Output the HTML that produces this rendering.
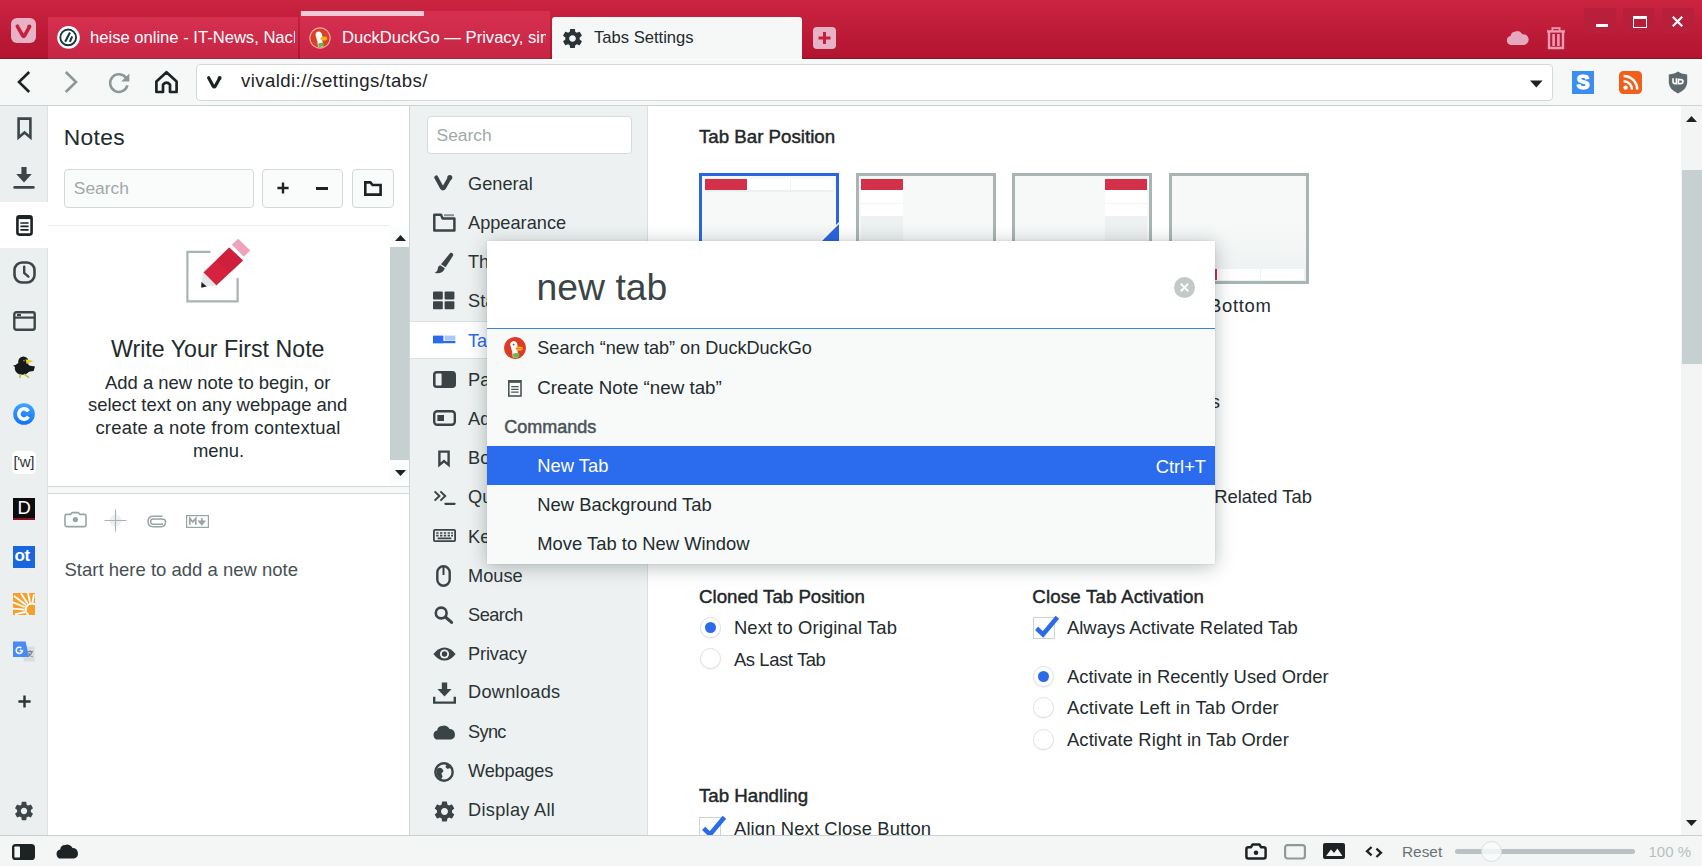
<!DOCTYPE html>
<html>
<head>
<meta charset="utf-8">
<title>Tabs Settings</title>
<style>
*{box-sizing:border-box;margin:0;padding:0}
html,body{width:1702px;height:866px;overflow:hidden;background:#fff}
body{font-family:"Liberation Sans",sans-serif;color:#222b2d;position:relative;font-size:18.4px}
.abs{position:absolute}
.t{position:absolute;white-space:pre;line-height:1}
svg{position:absolute;overflow:visible}
/* header */
#hdr{left:0;top:0;width:1702px;height:59px;background:linear-gradient(#ca2441,#b2142f);border-bottom:1px solid #8c122b}
.tab{position:absolute;top:17px;height:42px;background:linear-gradient(#d6304f,#c72545);border-bottom:1px solid #a92845}
.tab .t{color:#fff;font-size:16.6px;top:13px}
#tab3{background:#f6f8f8;border-radius:3px 3px 0 0;border-bottom:0}
#tab3 .t{color:#222b2d}
.wc{position:absolute;top:8px;width:32px;height:25px;background:#b81f3b;border-radius:2px}
/* toolbar */
#tb{left:0;top:59px;width:1702px;height:46px;background:#f6f8f8;border-top:1px solid #fdfcfd}
#tbline{left:0;top:105px;width:1702px;height:1px;background:#ccd3d3}
#addr{left:196px;top:64px;width:1357px;height:37px;background:#fff;border:1px solid #d3d9d9;border-radius:4px}
/* panel strip */
#strip{left:0;top:106px;width:48px;height:729px;background:#ebefef;border-right:1px solid #dde2e2}
#stripact{left:0;top:202px;width:48px;height:46px;background:#fff}
/* notes panel */
#notes{left:48px;top:106px;width:361px;height:729px;background:#fff}
#notesr{left:409px;top:106px;width:1px;height:729px;background:#cfd6d6}
.inp{position:absolute;background:#fafbfb;border:1px solid #d3d9d9;border-radius:4px}
/* settings sidebar */
#side{left:410px;top:106px;width:238px;height:729px;background:#edf1f1;border-right:1px solid #dbe0e0}
.si{position:absolute;left:468px;font-size:18.2px;color:#2a3335;white-space:pre;line-height:1}
/* content */
#content{left:648px;top:106px;width:1032px;height:729px;background:#fff}
h3{position:absolute;font-size:18.7px;font-weight:400;color:#1f2729;-webkit-text-stroke:.45px #1f2729;white-space:pre;line-height:1}
.lb{position:absolute;font-size:18.4px;color:#222b2d;white-space:pre;line-height:1}
.radio{position:absolute;width:21px;height:21px;border-radius:50%;background:#fff;border:1px solid #dde2e2;box-shadow:0 1px 1px rgba(0,0,0,.06)}
.radio.on::after{content:"";position:absolute;left:4px;top:4px;width:11px;height:11px;border-radius:50%;background:#2b6bea}
.cb{position:absolute;width:22px;height:22px;background:#fcfdfd;border:1px solid #cdd3d3}
.thumb{position:absolute;top:173px;width:140px;height:111px;border:3px solid #a9b4b4;background:linear-gradient(#f7f9f9 45%,#eef1f1)}
/* status bar */
#status{left:0;top:835px;width:1702px;height:31px;background:#f4f6f6;border-top:1px solid #c9d0d0}
/* popup */
#pop{left:487px;top:241.4px;width:728.3px;height:322.2px;background:#f8fafa;box-shadow:0 3px 18px rgba(0,30,30,.28),0 0 2px rgba(0,30,30,.10)}
#pophead{left:0;top:0;width:728px;height:87.5px;background:#fff;border-bottom:1px solid #3c82d8}
.row{position:absolute;left:0;width:728px;height:39px}
.row .t{left:50.3px;top:10px;font-size:18.4px}
</style>
</head>
<body>
<div id="hdr" class="abs">
<!-- vivaldi menu button -->
<div class="abs" style="left:11px;top:18px;width:25px;height:25px;border-radius:6px;background:#e8b2c6"></div>
<svg style="left:11px;top:18px" width="25" height="25" viewBox="0 0 25 25"><path d="M6.3 8.2 L11.6 17.6 Q12.6 19.2 13.6 17.6 L18 9.6" fill="none" stroke="#c5213e" stroke-width="3.6" stroke-linecap="round" stroke-linejoin="round"/><circle cx="18.3" cy="8.6" r="2.1" fill="#c5213e"/></svg>
<!-- tab 1 -->
<div class="tab" style="left:48px;width:250px"><div class="abs" style="left:0;top:0;width:247px;height:100%;overflow:hidden"><span class="t" style="left:42px">heise online - IT-News, Nach</span></div></div>
<svg style="left:57px;top:26.4px" width="23" height="23" viewBox="0 0 23 23"><circle cx="11.5" cy="11.4" r="11.3" fill="#fff"/><circle cx="11.2" cy="11.4" r="7.9" fill="none" stroke="#17393a" stroke-width="1.9"/><path d="M8.2 15.8 L13 6.6" stroke="#17393a" stroke-width="2.1"/><path d="M12.9 15.8 L15.2 10.4" stroke="#17393a" stroke-width="2.1"/></svg>
<!-- tab 2 -->
<div class="tab" style="left:300px;width:250px;top:11px;height:48px"><div class="abs" style="left:0;top:0;width:246px;height:100%;overflow:hidden"><span class="t" style="left:42px;top:19px">DuckDuckGo — Privacy, sim</span></div></div>
<div class="abs" style="left:301px;top:11px;width:123px;height:5px;background:#f3c8d7"></div>
<svg style="left:309.4px;top:27.2px" width="22" height="22" viewBox="0 0 22 22"><circle cx="11" cy="11" r="10.7" fill="#f5a9a3"/><circle cx="11" cy="11" r="9.6" fill="#dc3f28"/><path d="M6.8 6 Q10.4 3 12.8 6.4 Q13.8 9 13 12.2 L14.4 19.4 Q11.6 20.8 9 19.8 Q8.6 14.4 7.2 10.6 Q6 7.6 6.8 6Z" fill="#fcfcfa"/><ellipse cx="14.8" cy="11.6" rx="3.4" ry="2" fill="#f7b21d"/><path d="M9.2 16.6 Q12.2 15.2 15 16.2 L14.4 19 Q11.8 20.6 9.6 19.8Z" fill="#58c044"/></svg>
<!-- tab 3 active -->
<div class="tab" id="tab3" style="left:552px;width:250px"><span class="t" style="left:42px">Tabs Settings</span></div>
<svg style="left:561px;top:26.6px" width="23" height="23" viewBox="0 0 24 24"><path fill="#2a3335" d="M19.43 12.98c.04-.32.07-.64.07-.98s-.03-.66-.07-.98l2.11-1.65c.19-.15.24-.42.12-.64l-2-3.46c-.12-.22-.39-.3-.61-.22l-2.49 1c-.52-.4-1.08-.73-1.69-.98l-.38-2.65C14.46 2.18 14.25 2 14 2h-4c-.25 0-.46.18-.49.42l-.38 2.65c-.61.25-1.17.59-1.69.98l-2.49-1c-.23-.09-.49 0-.61.22l-2 3.46c-.13.22-.07.49.12.64l2.11 1.65c-.04.32-.07.65-.07.98s.03.66.07.98l-2.11 1.65c-.19.15-.24.42-.12.64l2 3.46c.12.22.39.3.61.22l2.49-1c.52.4 1.08.73 1.69.98l.38 2.65c.03.24.24.42.49.42h4c.25 0 .46-.18.49-.42l.38-2.65c.61-.25 1.17-.59 1.69-.98l2.49 1c.23.09.49 0 .61-.22l2-3.46c.12-.22.07-.49-.12-.64l-2.11-1.65zM12 15.5c-1.93 0-3.5-1.57-3.5-3.5s1.57-3.5 3.5-3.5 3.5 1.57 3.5 3.5-1.57 3.5-3.5 3.5z"/></svg>
<!-- new tab button -->
<div class="abs" style="left:813px;top:27px;width:23px;height:22px;border-radius:4px;background:#e8b2c6"></div>
<svg style="left:813px;top:27px" width="23" height="22" viewBox="0 0 23 22"><path d="M11.5 5 V17 M5.5 11 H17.5" stroke="#c5213e" stroke-width="3"/></svg>
<!-- cloud + trash -->
<svg style="left:1506px;top:30px" width="23" height="16" viewBox="0 0 23 16"><path fill="#e6a8bf" d="M5 15 A4.6 4.6 0 0 1 4.6 5.9 A5.2 5.2 0 0 1 9.4 1.4 A6.2 6.2 0 0 1 16.4 4.2 A5.4 5.4 0 0 1 18 15Z"/></svg>
<svg style="left:1546px;top:27px" width="20" height="23" viewBox="0 0 20 23"><path d="M1 4.4 H19" stroke="#ef9bb0" stroke-width="2.4"/><path d="M6.4 3.6 V1.2 H13.6 V3.6" fill="none" stroke="#ef9bb0" stroke-width="1.8"/><path d="M3 5 V21 H17 V5" fill="none" stroke="#ef9bb0" stroke-width="2.4"/><path d="M7.6 7 V19 M12.4 7 V19" stroke="#ef9bb0" stroke-width="2.6"/></svg>
<!-- window controls -->
<div class="wc" style="left:1584px"></div><div class="wc" style="left:1623px"></div><div class="wc" style="left:1662px"></div>
<div class="abs" style="left:1596px;top:24px;width:12px;height:3px;background:#fff"></div>
<div class="abs" style="left:1633px;top:15.5px;width:14px;height:12px;border:1.6px solid #fff;border-top-width:3.4px"></div>
<svg style="left:1672px;top:15.5px" width="11" height="11" viewBox="0 0 11 11"><path d="M0.8 0.8 L10.2 10.2 M10.2 0.8 L0.8 10.2" stroke="#fff" stroke-width="2.2"/></svg>
</div>
<div id="tb" class="abs"></div>
<svg style="left:14px;top:68px" width="20" height="28" viewBox="0 0 20 28"><path d="M15.2 4 L5 14 L15.2 24" fill="none" stroke="#1d2325" stroke-width="2.6"/></svg>
<svg style="left:61px;top:68px" width="20" height="28" viewBox="0 0 20 28"><path d="M4.8 4 L15 14 L4.8 24" fill="none" stroke="#8c9798" stroke-width="2.6"/></svg>
<svg style="left:106px;top:70px" width="26" height="26" viewBox="0 0 26 26"><path d="M20.2 8.2 A8.8 8.8 0 1 0 21.4 15.4" fill="none" stroke="#8c9798" stroke-width="2.5"/><path d="M23.4 3.4 V11.6 H15.2Z" fill="#8c9798"/></svg>
<svg style="left:153px;top:69px" width="27" height="27" viewBox="0 0 27 27"><path d="M3.4 12.4 L13.5 3.2 L23.6 12.4 V23 H17 V15.6 Q13.5 11.6 10 15.6 V23 H3.4Z" fill="none" stroke="#1d2325" stroke-width="2.7" stroke-linejoin="round"/></svg>
<div id="addr" class="abs"></div>
<svg style="left:206px;top:75px" width="17" height="15" viewBox="0 0 17 15"><path d="M2.6 2.8 L7.2 11.2 Q8.2 12.8 9.2 11.2 L13.2 4" fill="none" stroke="#1d2325" stroke-width="3.2" stroke-linecap="round" stroke-linejoin="round"/><circle cx="13.6" cy="3" r="2" fill="#1d2325"/></svg>
<span class="t" style="left:241px;top:72.2px;font-size:18.6px;letter-spacing:.42px;color:#1d2325">vivaldi://settings/tabs/</span>
<svg style="left:1530px;top:80px" width="13" height="8" viewBox="0 0 13 8"><path d="M0 0.4 H12.6 L6.3 7.4Z" fill="#1d2325"/></svg>
<!-- ext icons -->
<div class="abs" style="left:1572px;top:71px;width:22px;height:23px;background:#3b8eee"></div>
<span class="t" style="left:1576.5px;top:73px;font-size:19.5px;font-weight:700;color:#fff;-webkit-text-stroke:1.2px #fff">S</span>
<div class="abs" style="left:1619px;top:71px;width:23px;height:23px;border-radius:4.5px;background:#f0601c"></div>
<svg style="left:1619px;top:71px" width="23" height="23" viewBox="0 0 23 23"><circle cx="6.6" cy="16.6" r="2.2" fill="#fff"/><path d="M4.6 10.2 A8.4 8.4 0 0 1 13 18.6" fill="none" stroke="#fff" stroke-width="2.5"/><path d="M4.6 5 A13.6 13.6 0 0 1 18.2 18.6" fill="none" stroke="#fff" stroke-width="2.5"/></svg>
<svg style="left:1668px;top:71px" width="20" height="23" viewBox="0 0 20 23"><path d="M10 0.6 Q13 3 19.2 3.4 V12 Q18.6 18.6 10 22.4 Q1.4 18.6 0.8 12 V3.4 Q7 3 10 0.6Z" fill="#5d696c"/><path d="M5 7.2 V10.4 Q5 12.6 7.2 12.6 H8.4 V7.2" fill="none" stroke="#fff" stroke-width="1.6"/><path d="M10.4 7.4 V12.6 H12.4 Q15 12.6 15 10.4 Q15 8.6 12.6 8.6 H10.4" fill="none" stroke="#fff" stroke-width="1.6"/></svg>
<div id="tbline" class="abs"></div>
<div id="strip" class="abs"></div>
<div id="stripact" class="abs"></div>
<!-- bookmark -->
<svg style="left:17px;top:117px" width="15" height="23" viewBox="0 0 15 23"><path d="M1.6 1.6 H13.4 V20.4 L7.5 15.4 L1.6 20.4Z" fill="none" stroke="#3c4649" stroke-width="2.6" stroke-linejoin="miter"/></svg>
<!-- download -->
<svg style="left:14px;top:166px" width="20" height="24" viewBox="0 0 20 24"><path d="M7.4 1 H12.6 V8 H17.8 L10 16.4 L2.2 8 H7.4Z" fill="#3c4649"/><path d="M0.6 21.4 H19.4" stroke="#3c4649" stroke-width="2.6" stroke-linecap="round"/></svg>
<!-- notes (active) -->
<svg style="left:16px;top:215px" width="17" height="21" viewBox="0 0 17 21"><rect x="1.4" y="1.4" width="14.2" height="18.2" rx="2" fill="none" stroke="#1d2325" stroke-width="2.6"/><path d="M1.4 2.6 H15.6" stroke="#1d2325" stroke-width="3"/><path d="M4.4 8 H12.6 M4.4 11.4 H12.6 M4.4 14.8 H12.6" stroke="#1d2325" stroke-width="1.7"/></svg>
<!-- history -->
<svg style="left:13px;top:261px" width="23" height="23" viewBox="0 0 23 23"><rect x="1.5" y="1.5" width="20" height="20" rx="7.6" fill="none" stroke="#3c4649" stroke-width="2.6"/><path d="M11.2 5.6 V12 L15.4 15.6" fill="none" stroke="#3c4649" stroke-width="2.4" stroke-linecap="round"/></svg>
<!-- window -->
<svg style="left:13px;top:311px" width="23" height="20" viewBox="0 0 23 20"><rect x="1.3" y="1.3" width="20.4" height="17.4" rx="2" fill="none" stroke="#3c4649" stroke-width="2.4"/><path d="M1.3 6.6 H21.7" stroke="#3c4649" stroke-width="2.2"/><rect x="4" y="3" width="4" height="2.2" fill="#3c4649"/></svg>
<!-- bird -->
<svg style="left:12px;top:355px" width="24" height="24" viewBox="0 0 24 24"><ellipse cx="10.4" cy="13.4" rx="7.6" ry="6.4" fill="#14191a"/><circle cx="11.4" cy="6.8" r="5.2" fill="#14191a"/><path d="M1 10.6 L8 9 L8 16Z M14 10 L23 11.4 L21.6 16 L15 17Z" fill="#14191a"/><path d="M13.6 4.2 L21.6 6 L14.6 9Z" fill="#e8cf24"/><path d="M8.6 19 L7.6 23 M12 19.2 L17 22.6" stroke="#b9c238" stroke-width="1.6"/><circle cx="12" cy="5.6" r="0.9" fill="#d64"/></svg>
<!-- C -->
<svg style="left:13px;top:403px" width="22" height="22" viewBox="0 0 22 22"><defs><linearGradient id="cg" x1="0" y1="0" x2="0" y2="1"><stop offset="0" stop-color="#42a4ff"/><stop offset="1" stop-color="#1173f2"/></linearGradient></defs><circle cx="11" cy="11" r="10.8" fill="url(#cg)"/><path d="M15.4 8.2 A5.2 5.2 0 1 0 15.4 13.8" fill="none" stroke="#fff" stroke-width="3.6"/></svg>
<!-- ['w] -->
<div class="abs" style="left:12px;top:451px;width:24px;height:23px;border-radius:5px;background:#fff"></div>
<span class="t" style="left:13.5px;top:454px;font-size:15px;color:#2b3436;letter-spacing:-.4px">['w]</span>
<!-- D -->
<div class="abs" style="left:13px;top:498px;width:22px;height:22px;background:#0c0c0e;border-bottom:2px solid #8a1220"></div>
<span class="t" style="left:17.5px;top:499px;font-size:18.5px;color:#fff">D</span>
<!-- ot -->
<div class="abs" style="left:13px;top:546px;width:22px;height:22px;background:#1a66e0"></div>
<span class="t" style="left:14.5px;top:547px;font-size:17px;font-weight:700;color:#fff;letter-spacing:-.5px">ot</span>
<!-- sun -->
<svg style="left:13px;top:593px" width="22" height="22" viewBox="0 0 22 22"><rect width="22" height="22" fill="#f5a02c"/><path d="M1 3 L13 12 M0 9.4 L11.6 14 M0 15.6 L11.4 16.6 M2 21.4 L12 19 M8 0.6 L14.6 10.4 M15 0 L17 9.6 M21 1.4 L19.4 10" stroke="#fff" stroke-width="1.8"/><path d="M22 11.4 A5.6 5.6 0 0 0 15.6 22" fill="none" stroke="#fff" stroke-width="2"/></svg>
<!-- G translate -->
<svg style="left:12px;top:640px" width="24" height="24" viewBox="0 0 24 24"><path d="M9 6.4 H22.6 V21.6 H12Z" fill="#d9dde0"/><path d="M1 1.4 H13.6 L17 17 H1Z" fill="#4a8af4"/><path d="M9.4 8 A3.1 3.1 0 1 0 10.4 10.6 H7.6" fill="none" stroke="#fff" stroke-width="1.5"/><path d="M15.4 11.6 H21 M18.2 10.2 V11.6 M16.4 16.4 Q19.4 14.6 20 11.6 M16.6 13 Q17.8 15.6 20.6 16.6" fill="none" stroke="#7d868c" stroke-width="1.2"/></svg>
<!-- plus -->
<svg style="left:17.5px;top:694.5px" width="13" height="13" viewBox="0 0 13 13"><path d="M6.5 0.4 V12.6 M0.4 6.5 H12.6" stroke="#2a3335" stroke-width="2.4"/></svg>
<!-- gear -->
<svg style="left:13px;top:800px" width="22" height="22" viewBox="0 0 24 24"><path fill="#3c4649" d="M19.43 12.98c.04-.32.07-.64.07-.98s-.03-.66-.07-.98l2.11-1.65c.19-.15.24-.42.12-.64l-2-3.46c-.12-.22-.39-.3-.61-.22l-2.49 1c-.52-.4-1.08-.73-1.69-.98l-.38-2.65C14.46 2.18 14.25 2 14 2h-4c-.25 0-.46.18-.49.42l-.38 2.65c-.61.25-1.17.59-1.69.98l-2.49-1c-.23-.09-.49 0-.61.22l-2 3.46c-.13.22-.07.49.12.64l2.11 1.65c-.04.32-.07.65-.07.98s.03.66.07.98l-2.11 1.65c-.19.15-.24.42-.12.64l2 3.46c.12.22.39.3.61.22l2.49-1c.52.4 1.08.73 1.69.98l.38 2.65c.03.24.24.42.49.42h4c.25 0 .46-.18.49-.42l.38-2.65c.61-.25 1.17-.59 1.69-.98l2.49 1c.23.09.49 0 .61-.22l2-3.46c.12-.22.07-.49-.12-.64l-2.11-1.65zM12 15.5c-1.93 0-3.5-1.57-3.5-3.5s1.57-3.5 3.5-3.5 3.5 1.57 3.5 3.5-1.57 3.5-3.5 3.5z"/></svg>
<div id="notes" class="abs"></div>
<span class="t" style="left:63.8px;top:126.2px;font-size:22.8px;letter-spacing:.3px;color:#222b2d">Notes</span>
<div class="inp" style="left:64px;top:169px;width:190px;height:39px"></div>
<span class="t" style="left:73.8px;top:179.8px;font-size:17.4px;color:#a0a9a9">Search</span>
<div class="inp" style="left:262px;top:169px;width:81px;height:39px"></div>
<svg style="left:277px;top:182px" width="12" height="12" viewBox="0 0 12 12"><path d="M6 0.4 V11.6 M0.4 6 H11.6" stroke="#1d2325" stroke-width="2.4"/></svg>
<div class="abs" style="left:316px;top:187px;width:12px;height:2.6px;background:#1d2325"></div>
<div class="inp" style="left:352px;top:169px;width:42px;height:39px"></div>
<svg style="left:364px;top:181px" width="18" height="15" viewBox="0 0 18 15"><path d="M1.3 13.6 V1.4 H6.4 L8.6 4 H16.6 V13.6Z" fill="none" stroke="#1d2325" stroke-width="2.6" stroke-linejoin="miter"/></svg>
<!-- list area -->
<div class="abs" style="left:48px;top:225px;width:342px;height:1px;background:#e9eded"></div>
<div class="abs" style="left:390px;top:226px;width:19px;height:260px;background:#fbfcfc"></div>
<div class="abs" style="left:390px;top:247px;width:19px;height:213px;background:#c7d0d1"></div>
<svg style="left:394.5px;top:235px" width="11" height="6" viewBox="0 0 11 6"><path d="M0 6 L5.5 0 L11 6Z" fill="#1d2325"/></svg>
<svg style="left:394.5px;top:469.5px" width="11" height="6" viewBox="0 0 11 6"><path d="M0 0 L5.5 6 L11 0Z" fill="#1d2325"/></svg>
<!-- pencil icon -->
<svg style="left:180px;top:235px" width="76" height="72" viewBox="180 235 76 72"><path d="M210.5 251.8 H187.4 V301.4 H237.6 V278" fill="none" stroke="#a8b3b3" stroke-width="2.2"/><path d="M203.4 272.5 L229.2 247.5 L243 260.4 L216.3 285.5Z" fill="#d4233f"/><path d="M216.4 260 L229.2 247.5 L243 260.4 L230 272.6Z" fill="#c81f3b" opacity=".55"/><path d="M231.8 244.8 L238.2 238.8 L250.2 250.4 L243.8 256.8Z" fill="#eea3bd"/><path d="M203.4 272.5 L216.3 285.5 L206.6 286.4 L201.4 282.2Z" fill="#e3e9e9"/><path d="M201.4 282 L201.2 287.8 L206.8 286.4Z" fill="#1d2325"/></svg>
<span class="t" style="left:111px;top:337.5px;font-size:23.2px;color:#222b2d">Write Your First Note</span>
<span class="t" style="left:105px;top:373.5px;font-size:18.45px;color:#222b2d">Add a new note to begin, or</span>
<span class="t" style="left:88px;top:396.3px;font-size:18.45px;color:#222b2d">select text on any webpage and</span>
<span class="t" style="left:95.4px;top:419.2px;font-size:18.45px;letter-spacing:.22px;color:#222b2d">create a note from contextual</span>
<span class="t" style="left:193px;top:442px;font-size:18.45px;color:#222b2d">menu.</span>
<!-- splitter -->
<div class="abs" style="left:48px;top:486px;width:361px;height:8px;background:#f6f8f8;border-top:1px solid #d2d8d8;border-bottom:1px solid #d2d8d8"></div>
<!-- editor toolbar -->
<svg style="left:64px;top:511px" width="23" height="17" viewBox="0 0 23 17"><path d="M2.6 3.4 H6.6 L8 1.6 H14.4 L15.8 3.4 H20.4 Q22 3.4 22 5 V14 Q22 15.6 20.4 15.6 H2.6 Q1 15.6 1 14 V5 Q1 3.4 2.6 3.4Z" fill="none" stroke="#98a3a3" stroke-width="1.6"/><circle cx="11.4" cy="8.6" r="2.6" fill="#98a3a3"/></svg>
<svg style="left:104px;top:509px" width="23" height="23" viewBox="0 0 23 23"><circle cx="11.5" cy="11.5" r="6" fill="#eef1f1"/><path d="M11.5 0.5 V22.5 M0.5 11.5 H22.5" stroke="#a9b3b3" stroke-width="1.1"/></svg>
<svg style="left:147px;top:515px" width="20" height="13" viewBox="0 0 20 13"><path d="M16 9.2 H6 Q3.6 9.2 3.6 6.6 Q3.6 4 6 4 H14.4 Q18.6 4 18.6 6.6 Q18.6 11.8 14 11.8 H5.8 Q1 11.8 1 6.6 Q1 1.2 5.8 1.2 H15.4" fill="none" stroke="#98a3a3" stroke-width="1.5"/></svg>
<svg style="left:186px;top:514.5px" width="23" height="13" viewBox="0 0 23 13"><rect x="0.6" y="0.6" width="21.8" height="11.8" fill="none" stroke="#98a3a3" stroke-width="1.2"/><path d="M3.8 9.8 V3.4 L6.8 7 L9.8 3.4 V9.8" fill="none" stroke="#98a3a3" stroke-width="1.7"/><path d="M15.8 3 V8 M13 6.2 L15.8 9.6 L18.6 6.2Z" fill="#98a3a3" stroke="#98a3a3" stroke-width="1.5"/></svg>
<span class="t" style="left:64.5px;top:560.7px;font-size:18.5px;color:#465053">Start here to add a new note</span>
<div id="notesr" class="abs"></div>
<div id="side" class="abs"></div>
<div class="abs" style="left:427.4px;top:116px;width:204.2px;height:38.4px;background:#fff;border:1px solid #d5dbdb;border-radius:4px"></div>
<span class="t" style="left:436.6px;top:126.9px;font-size:17.4px;color:#a0a9a9">Search</span>
<div class="abs" style="left:410px;top:321px;width:237px;height:38px;background:#fff;border-top:1px solid #dbe0e0;border-bottom:1px solid #dbe0e0"></div>
<span class="si" style="top:174.5px;color:#2a3335">General</span>
<span class="si" style="top:213.5px;color:#2a3335">Appearance</span>
<span class="si" style="top:252.5px;color:#2a3335">Themes</span>
<span class="si" style="top:292.0px;color:#2a3335">Start Page</span>
<span class="si" style="top:331.5px;color:#2b6bea">Tabs</span>
<span class="si" style="top:370.5px;color:#2a3335">Panel</span>
<span class="si" style="top:409.5px;color:#2a3335">Address Bar</span>
<span class="si" style="top:449.0px;color:#2a3335">Bookmarks</span>
<span class="si" style="top:488.0px;color:#2a3335">Quick Commands</span>
<span class="si" style="top:527.5px;color:#2a3335">Keyboard</span>
<span class="si" style="top:566.5px;color:#2a3335">Mouse</span>
<span class="si" style="top:605.5px;color:#2a3335;letter-spacing:-0.5px">Search</span>
<span class="si" style="top:644.5px;color:#2a3335;letter-spacing:-0.15px">Privacy</span>
<span class="si" style="top:683.0px;color:#2a3335;letter-spacing:0.27px">Downloads</span>
<span class="si" style="top:722.5px;color:#2a3335;letter-spacing:-0.67px">Sync</span>
<span class="si" style="top:761.5px;color:#2a3335;letter-spacing:-0.2px">Webpages</span>
<span class="si" style="top:801.2px;color:#2a3335;letter-spacing:0.3px">Display All</span>
<svg style="left:433px;top:174px" width="21" height="18" viewBox="0 0 21 18"><path d="M3.2 3.4 L8.8 13.6 Q10 15.4 11.2 13.6 L16.2 4.8" fill="none" stroke="#3a4447" stroke-width="4" stroke-linecap="round" stroke-linejoin="round"/><circle cx="16.8" cy="3.6" r="2.5" fill="#3a4447"/></svg>
<svg style="left:433px;top:213px" width="23" height="19" viewBox="0 0 23 19"><path d="M1.3 17.6 V1.8 H8 L9.6 5.4 H21.4 V17.6Z" fill="none" stroke="#3a4447" stroke-width="2.5" stroke-linejoin="round"/><path d="M11 2.2 H21 " stroke="#3a4447" stroke-width="2" opacity=".55"/></svg>
<svg style="left:434px;top:252px" width="20" height="22" viewBox="0 0 20 22"><path d="M16.4 0.8 Q19.8 0.4 19 3.8 L11.6 15.2 L7 12.2 Z" fill="#3a4447"/><path d="M6.2 13.2 L10.8 16.2 Q9.4 22 0.6 21 Q4 18.8 3.8 16.2 Q4.2 13.6 6.2 13.2Z" fill="#3a4447"/></svg>
<svg style="left:433px;top:291px" width="22" height="19" viewBox="0 0 22 19"><rect x="0" y="0.4" width="9.8" height="8" rx="1" fill="#3a4447"/><rect x="11.6" y="0.4" width="9.8" height="8" rx="1" fill="#3a4447"/><rect x="0" y="10.2" width="9.8" height="8" rx="1" fill="#3a4447"/><rect x="11.6" y="10.2" width="9.8" height="8" rx="1" fill="#3a4447"/></svg>
<svg style="left:433px;top:335px" width="23" height="9" viewBox="0 0 23 9"><rect x="0" y="0.6" width="10.4" height="7.6" fill="#2b6bea"/><rect x="11.6" y="0.6" width="10.8" height="5" fill="#a9c8f5"/><rect x="0" y="6" width="22.4" height="2.2" fill="#2b6bea"/></svg>
<svg style="left:433px;top:371px" width="23" height="17" viewBox="0 0 23 17"><rect x="1.2" y="1.2" width="20.6" height="14.6" rx="2.6" fill="#3a4447" stroke="#3a4447" stroke-width="2.4"/><rect x="2.6" y="2.6" width="6" height="11.8" rx="1" fill="#edf1f1"/></svg>
<svg style="left:433px;top:410px" width="23" height="16" viewBox="0 0 23 16"><rect x="1.2" y="1.2" width="20.6" height="13.6" rx="3" fill="none" stroke="#3a4447" stroke-width="2.4"/><rect x="4.4" y="5" width="6.6" height="6" fill="#3a4447"/></svg>
<svg style="left:437.6px;top:449.6px" width="12" height="17" viewBox="0 0 13 18"><path d="M1.5 1.5 H11.5 V16 L6.5 11.8 L1.5 16Z" fill="none" stroke="#3a4447" stroke-width="2.6"/></svg>
<svg style="left:433px;top:490px" width="23" height="16" viewBox="0 0 23 16"><path d="M1.6 1.4 L6.4 6 L1.6 10.6 M7.4 1.4 L12.2 6 L7.4 10.6" fill="none" stroke="#3a4447" stroke-width="2"/><path d="M12.4 13.8 H21.6" stroke="#3a4447" stroke-width="2.2" stroke-linecap="round"/></svg>
<svg style="left:433px;top:529px" width="23" height="13" viewBox="0 0 23 13"><rect x="0.9" y="0.9" width="21.2" height="11.2" rx="1" fill="none" stroke="#3a4447" stroke-width="1.8"/><path d="M3.2 4 H5.6 M7 4 H9.4 M10.8 4 H13.2 M14.6 4 H17 M18.2 4 H20 M3.2 6.6 H5.6 M7 6.6 H9.4 M10.8 6.6 H13.2 M14.6 6.6 H17 M18.2 6.6 H20 M4.6 9.4 H18.4" stroke="#3a4447" stroke-width="1.7"/></svg>
<svg style="left:436px;top:564.5px" width="15" height="22" viewBox="0 0 15 22"><rect x="1.3" y="1.3" width="12.4" height="19.4" rx="6.2" fill="none" stroke="#3a4447" stroke-width="2.4"/><path d="M7.5 1.6 V10" stroke="#3a4447" stroke-width="2"/></svg>
<svg style="left:434px;top:606px" width="20" height="18" viewBox="0 0 20 18"><circle cx="7.2" cy="7" r="5.4" fill="none" stroke="#3a4447" stroke-width="2.6"/><path d="M11.4 11 L17.6 16.4" stroke="#3a4447" stroke-width="3" stroke-linecap="round"/></svg>
<svg style="left:432.5px;top:647px" width="23" height="14" viewBox="0 0 23 14"><path d="M0.4 7 Q5.4 0.4 11.5 0.4 Q17.6 0.4 22.6 7 Q17.6 13.6 11.5 13.6 Q5.4 13.6 0.4 7Z" fill="#3a4447"/><circle cx="11.5" cy="7" r="4.6" fill="#edf1f1"/><circle cx="11.5" cy="7" r="2.7" fill="#3a4447"/></svg>
<svg style="left:433px;top:682px" width="23" height="22" viewBox="0 0 23 22"><path d="M8.8 0.4 H14.2 V7 H18.6 L11.5 14.6 L4.4 7 H8.8Z" fill="#3a4447"/><path d="M1.2 14.8 V20.6 H21.8 V14.8" fill="none" stroke="#3a4447" stroke-width="2.4"/></svg>
<svg style="left:433px;top:725px" width="23" height="15" viewBox="0 0 23 15"><path fill="#3a4447" d="M5 14.6 A4.6 4.6 0 0 1 4.2 5.5 A5 5 0 0 1 9 1 A6.2 6.2 0 0 1 16.6 4 A5.4 5.4 0 0 1 18 14.6Z"/></svg>
<svg style="left:434px;top:761.5px" width="20" height="20" viewBox="0 0 20 20"><circle cx="10" cy="10" r="8.7" fill="none" stroke="#3a4447" stroke-width="2.4"/><path d="M3.4 6.4 Q6 5 8 6.4 L9.6 9 L7.4 11.4 L8.6 14.6 L7 17.4 Q2 14 2.4 9Z M12.6 2.4 L11.4 5 L13.6 7 L16 6 L17.4 7.6 Q16.6 3.8 12.6 2.4Z" fill="#3a4447"/></svg>
<svg style="left:433.5px;top:800.5px" width="21" height="21" viewBox="1.5 1.5 21 21"><path fill="#3a4447" d="M19.43 12.98c.04-.32.07-.64.07-.98s-.03-.66-.07-.98l2.11-1.65c.19-.15.24-.42.12-.64l-2-3.46c-.12-.22-.39-.3-.61-.22l-2.49 1c-.52-.4-1.08-.73-1.69-.98l-.38-2.65C14.46 2.18 14.25 2 14 2h-4c-.25 0-.46.18-.49.42l-.38 2.65c-.61.25-1.17.59-1.69.98l-2.49-1c-.23-.09-.49 0-.61.22l-2 3.46c-.13.22-.07.49.12.64l2.11 1.65c-.04.32-.07.65-.07.98s.03.66.07.98l-2.11 1.65c-.19.15-.24.42-.12.64l2 3.46c.12.22.39.3.61.22l2.49-1c.52.4 1.08.73 1.69.98l.38 2.65c.03.24.24.42.49.42h4c.25 0 .46-.18.49-.42l.38-2.65c.61-.25 1.17-.59 1.69-.98l2.49 1c.23.09.49 0 .61-.22l2-3.46c.12-.22.07-.49-.12-.64l-2.11-1.65zM12 15.5c-1.93 0-3.5-1.57-3.5-3.5s1.57-3.5 3.5-3.5 3.5 1.57 3.5 3.5-1.57 3.5-3.5 3.5z"/></svg>
<div id="content" class="abs"></div>
<!-- main scrollbar -->
<div class="abs" style="left:1681px;top:106px;width:21px;height:729px;background:#f3f5f5"></div>
<div class="abs" style="left:1682px;top:170px;width:20px;height:194px;background:#c7d0d1"></div>
<svg style="left:1686px;top:116px" width="11" height="6" viewBox="0 0 11 6"><path d="M0 6 L5.5 0 L11 6Z" fill="#1d2325"/></svg>
<svg style="left:1685.5px;top:819.5px" width="11" height="6" viewBox="0 0 11 6"><path d="M0 0 L5.5 6 L11 0Z" fill="#1d2325"/></svg>
<h3 style="left:699px;top:128.1px">Tab Bar Position</h3>
<!-- thumbnails -->
<div class="thumb" style="left:699px;border-color:#2b66e0">
 <div class="abs" style="left:3px;top:3px;width:42px;height:11px;background:#d3304a"></div>
 <div class="abs" style="left:45px;top:3px;width:86px;height:11px;background:#fff"></div>
 <div class="abs" style="left:88px;top:3px;width:1px;height:11px;background:#f1f3f3"></div>
 <div class="abs" style="left:3px;top:14px;width:128px;height:2px;background:#eef1f1"></div>
 <svg style="right:-3px;bottom:-3px" width="62" height="62" viewBox="0 0 62 62"><path d="M62 0 V62 H0Z" fill="#fff"/><path d="M62 2 V62 H2Z" fill="#2b66e0"/></svg>
</div>
<div class="thumb" style="left:856.2px">
 <div class="abs" style="left:2px;top:3px;width:42px;height:11px;background:#d3304a"></div>
 <div class="abs" style="left:2px;top:14px;width:42px;height:26px;background:#fff"></div>
 <div class="abs" style="left:2px;top:27px;width:42px;height:1px;background:#f3f5f5"></div>
 <div class="abs" style="left:2px;top:40px;width:42px;height:66px;background:linear-gradient(#eef1f1,#e8ecec)"></div>
</div>
<div class="thumb" style="left:1012.2px">
 <div class="abs" style="right:2.5px;top:3px;width:42px;height:11px;background:#d3304a"></div>
 <div class="abs" style="right:2.5px;top:14px;width:42px;height:26px;background:#fff"></div>
 <div class="abs" style="right:2.5px;top:27px;width:42px;height:1px;background:#f3f5f5"></div>
 <div class="abs" style="right:2.5px;top:40px;width:42px;height:66px;background:linear-gradient(#eef1f1,#e8ecec)"></div>
</div>
<div class="thumb" style="left:1169.2px">
 <div class="abs" style="left:2.5px;bottom:1.2px;width:42px;height:11px;background:#d3304a"></div>
 <div class="abs" style="left:44.5px;bottom:1.2px;width:87px;height:11px;background:#fff"></div>
 <div class="abs" style="left:88px;bottom:1.2px;width:1px;height:11px;background:#f1f3f3"></div>
</div>
<span class="lb" style="left:754px;top:297.3px">Top</span>
<span class="lb" style="left:910px;top:297.3px">Left</span>
<span class="lb" style="left:1061px;top:297.3px">Right</span>
<span class="lb" style="left:1209px;top:297.3px;letter-spacing:.7px">Bottom</span>
<span class="lb" style="right:482px;top:392.6px">After Related Tabs</span>
<span class="lb" style="right:390px;top:488.1px">Always After Related Tab</span>
<!-- cloned tab position -->
<h3 style="left:699px;top:588.1px">Cloned Tab Position</h3>
<div class="radio on" style="left:699.5px;top:616.5px"></div>
<span class="lb" style="left:734px;top:619.3px;letter-spacing:.09px">Next to Original Tab</span>
<div class="radio" style="left:699.5px;top:648px"></div>
<span class="lb" style="left:734px;top:651.3px;letter-spacing:-.4px">As Last Tab</span>
<!-- close tab activation -->
<h3 style="left:1032.2px;top:588.1px;letter-spacing:.2px">Close Tab Activation</h3>
<div class="cb" style="left:1032.5px;top:616.5px"></div>
<svg style="left:1033px;top:614.5px" width="26" height="24" viewBox="0 0 26 24"><path d="M3.6 13.4 L10 19.4 L24.4 2.2" fill="none" stroke="#2b6bea" stroke-width="4.6" stroke-linejoin="miter"/></svg>
<span class="lb" style="left:1067px;top:619.2px">Always Activate Related Tab</span>
<div class="radio on" style="left:1032.5px;top:666px"></div>
<span class="lb" style="left:1067px;top:667.8px">Activate in Recently Used Order</span>
<div class="radio" style="left:1032.5px;top:697.2px"></div>
<span class="lb" style="left:1067px;top:699.2px;letter-spacing:.18px">Activate Left in Tab Order</span>
<div class="radio" style="left:1032.5px;top:728.5px"></div>
<span class="lb" style="left:1067px;top:731px;letter-spacing:.09px">Activate Right in Tab Order</span>
<!-- tab handling -->
<h3 style="left:699px;top:787.2px">Tab Handling</h3>
<div class="cb" style="left:699.3px;top:816.5px"></div>
<svg style="left:700px;top:814.5px" width="26" height="24" viewBox="0 0 26 24"><path d="M3.6 13.4 L10 19.4 L24.4 2.2" fill="none" stroke="#2b6bea" stroke-width="4.6" stroke-linejoin="miter"/></svg>
<span class="lb" style="left:734px;top:819.5px;letter-spacing:.13px">Align Next Close Button</span>
<div id="status" class="abs"></div>
<!-- panel toggle -->
<svg style="left:12px;top:843.5px" width="23" height="16" viewBox="0 0 23 16"><rect x="1.2" y="1.2" width="20.6" height="13.6" rx="2.4" fill="#1d2325" stroke="#1d2325" stroke-width="2.4"/><rect x="2.4" y="2.4" width="5.6" height="11.2" rx=".8" fill="#f4f6f6"/></svg>
<svg style="left:56px;top:843.5px" width="23" height="15" viewBox="0 0 23 15"><path fill="#1d2325" d="M5 14.6 A4.6 4.6 0 0 1 4.2 5.5 A5 5 0 0 1 9 1 A6.2 6.2 0 0 1 16.6 4 A5.4 5.4 0 0 1 18 14.6Z"/></svg>
<!-- camera -->
<svg style="left:1245px;top:842.5px" width="22" height="17" viewBox="0 0 22 17"><path d="M3.4 4.2 H6 L7.6 1.4 H14.4 L16 4.2 H18.6 Q20.6 4.2 20.6 6.2 V13.4 Q20.6 15.4 18.6 15.4 H3.4 Q1.4 15.4 1.4 13.4 V6.2 Q1.4 4.2 3.4 4.2Z" fill="none" stroke="#1d2325" stroke-width="2.5" stroke-linejoin="round"/><circle cx="11" cy="9.8" r="2.3" fill="#1d2325"/></svg>
<!-- tiling -->
<svg style="left:1284px;top:843.5px" width="22" height="16" viewBox="0 0 22 16"><rect x="1.1" y="1.1" width="19.8" height="13.4" rx="2.4" fill="none" stroke="#8e9999" stroke-width="2.2"/></svg>
<!-- image -->
<svg style="left:1323px;top:843px" width="22" height="16" viewBox="0 0 22 16"><rect x="0" y="0" width="22" height="16" rx="2" fill="#1d2325"/><path d="M3 13 L8 6.4 L11 10 L14.4 5.4 L19.4 13Z" fill="#f4f6f6"/></svg>
<!-- code -->
<svg style="left:1365px;top:845.5px" width="18" height="12" viewBox="0 0 18 12"><path d="M6.6 1 L2 5.2 L6.6 9.4" fill="none" stroke="#1d2325" stroke-width="2.3"/><path d="M11.4 2.6 L16 6.8 L11.4 11" fill="none" stroke="#1d2325" stroke-width="2.3"/></svg>
<span class="t" style="left:1402px;top:843.8px;font-size:15.4px;color:#687275">Reset</span>
<div class="abs" style="left:1454.5px;top:848.5px;width:180px;height:5px;border-radius:3px;background:#b9c2c2"></div>
<div class="abs" style="left:1480.5px;top:840.5px;width:21px;height:21px;border-radius:50%;background:rgba(250,252,252,.8);border:1px solid #d9dede"></div>
<span class="t" style="left:1648.5px;top:844px;font-size:15px;color:#b7bfc0">100 %</span>
<div id="pop" class="abs"><div id="pophead" class="abs"></div>
<span class="t" style="left:49.6px;top:27.2px;font-size:37.3px;color:#3b4447">new tab</span>
<div class="abs" style="left:686.5px;top:35.5px;width:21px;height:21px;border-radius:50%;background:#c3c8c8"></div>
<svg style="left:692.5px;top:41.5px" width="9" height="9" viewBox="0 0 9 9"><path d="M0.8 0.8 L8.2 8.2 M8.2 0.8 L0.8 8.2" stroke="#fff" stroke-width="2"/></svg>
<!-- row 1 -->
<svg style="left:17px;top:96px" width="22" height="22" viewBox="0 0 22 22"><circle cx="11" cy="11" r="10.9" fill="#dc3b25"/><path d="M6.6 5.6 Q10.4 2.4 13 6 Q14.2 9 13.2 12.4 L14.8 19.8 Q11.6 21.4 8.8 20.2 Q8.4 14.4 7 10.6 Q5.8 7.4 6.6 5.6Z" fill="#fcfcfa"/><ellipse cx="15.2" cy="11.6" rx="3.6" ry="2.1" fill="#f7b21d"/><path d="M12.4 11.6 H18.6" stroke="#e8772a" stroke-width=".9"/><path d="M9 16.8 Q12.4 15.2 15.6 16.4 L15 19.6 Q12 21.4 9.4 20.4Z" fill="#58c044"/><circle cx="9.6" cy="7.6" r="0.9" fill="#3a5a8c"/></svg>
<div class="row" style="top:87px"><span class="t" style="font-size:18.1px;top:10.6px">Search “new tab” on DuckDuckGo</span></div>
<svg style="left:21.2px;top:138.2px" width="14" height="17" viewBox="0 0 14 17"><rect x="0.8" y="0.8" width="12.2" height="15.2" fill="none" stroke="#4a5457" stroke-width="1.6"/><path d="M0.8 1.6 H13" stroke="#4a5457" stroke-width="2.6"/><path d="M3.2 6.6 H10.6 M3.2 9.4 H10.6 M3.2 12.2 H10.6" stroke="#4a5457" stroke-width="1.3"/></svg>
<div class="row" style="top:126px"><span class="t" style="font-size:18.75px;top:11.4px">Create Note “new tab”</span></div>
<span class="t" style="left:17.3px;top:176.6px;font-size:18px;color:#4a5457;-webkit-text-stroke:.5px #4a5457">Commands</span>
<div class="row" style="top:205px;height:39px;background:#2b6cee"><span class="t" style="color:#fff;top:10.6px">New Tab</span><span class="t" style="color:#fff;left:auto;right:9px;top:11.6px;font-size:18.3px">Ctrl+T</span></div>
<div class="row" style="top:244px"><span class="t" style="top:10.6px">New Background Tab</span></div>
<div class="row" style="top:283px"><span class="t" style="top:10.6px">Move Tab to New Window</span></div>
</div>
</body>
</html>
